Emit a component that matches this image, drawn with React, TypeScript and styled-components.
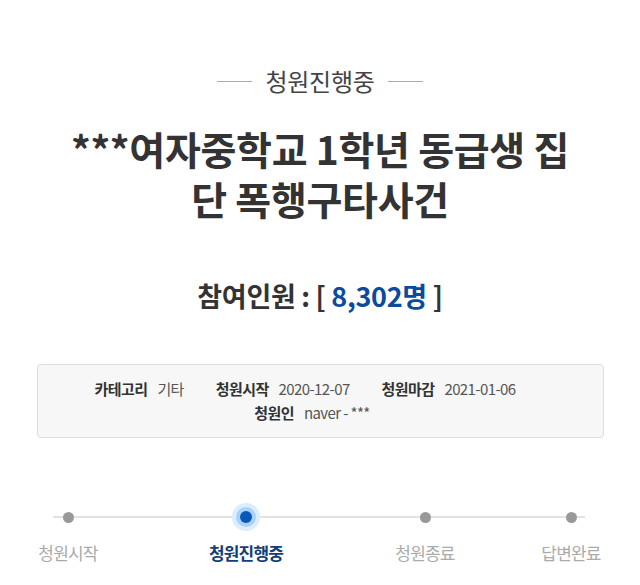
import React from "react";
import styled, { createGlobalStyle } from "styled-components";

const GlobalStyle = createGlobalStyle`
  body {
    margin: 0;
    background: #fff;
    font-family: "Noto Sans CJK KR", "Noto Sans", sans-serif;
    color: #333;
  }
`;

const Page = styled.div`
  width: 640px;
  height: 585px;
  overflow: hidden;
  display: flex;
  flex-direction: column;
  align-items: center;
`;

const Status = styled.div`
  margin-top: 66px;
  display: flex;
  align-items: center;
  gap: 14px;
  font-size: 24px;
  line-height: 30px;
  color: #444;
  letter-spacing: -0.3px;
  &::before,
  &::after {
    content: "";
    width: 35px;
    height: 1px;
    background: #aaa;
  }
`;

const Title = styled.h1`
  margin: 27px 0 0;
  width: 520px;
  text-align: center;
  font-size: 39px;
  line-height: 50px;
  font-weight: 700;
  color: #333;
  letter-spacing: -0.3px;
`;

const Count = styled.div`
  margin-top: 56px;
  font-size: 27px;
  line-height: 34px;
  font-weight: 700;
  color: #333;
  letter-spacing: -0.3px;
  span {
    color: #0b4a9c;
  }
`;

const InfoBox = styled.div`
  margin-top: 51px;
  width: 567px;
  height: 74px;
  box-sizing: border-box;
  background: #f7f7f7;
  border: 1px solid #ddd;
  border-radius: 4px;
  display: flex;
  flex-direction: column;
  justify-content: center;
  gap: 2px;
`;

const InfoRow = styled.div<{ $shift: number }>`
  display: flex;
  justify-content: center;
  gap: 32px;
  padding-right: ${(p) => p.$shift}px;
  font-size: 15px;
  line-height: 22px;
`;

const Item = styled.div`
  display: flex;
  gap: 10px;
  letter-spacing: -0.6px;
`;

const Label = styled.span`
  font-weight: 700;
  color: #333;
`;

const Value = styled.span`
  color: #555;
`;

const Steps = styled.div`
  margin-top: 67px;
  width: 640px;
  position: relative;
  display: flex;
  &::before {
    content: "";
    position: absolute;
    left: 53px;
    width: 532px;
    top: 11px;
    height: 2px;
    background: #e2e2e2;
  }
`;

const Step = styled.div<{ $offset: number }>`
  margin-left: ${(p) => p.$offset}px;
  width: 80px;
  display: flex;
  flex-direction: column;
  align-items: center;
  position: relative;
`;

const DotWrap = styled.div`
  width: 26px;
  height: 24px;
  display: flex;
  align-items: center;
  justify-content: center;
`;

const Dot = styled.div`
  width: 11px;
  height: 11px;
  border-radius: 50%;
  background: #999;
`;

const ActiveDot = styled.div`
  width: 12px;
  height: 12px;
  border-radius: 50%;
  background: #0a57b8;
  box-shadow: 0 0 0 4px #a9d2fb, 0 0 0 8px #dcedfd;
`;

const StepLabel = styled.div<{ $active?: boolean }>`
  margin-top: 12px;
  font-size: 17px;
  line-height: 24px;
  white-space: nowrap;
  letter-spacing: -0.8px;
  font-weight: ${(p) => (p.$active ? 700 : 400)};
  color: ${(p) => (p.$active ? "#143e78" : "#aaa")};
`;

const steps = [
  { label: "청원시작", offset: 28 },
  { label: "청원진행중", offset: 98, active: true },
  { label: "청원종료", offset: 99 },
  { label: "답변완료", offset: 66 },
];

export default function App() {
  return (
    <Page>
      <GlobalStyle />
      <Status>청원진행중</Status>
      <Title>***여자중학교 1학년 동급생 집단 폭행구타사건</Title>
      <Count>
        참여인원 : [ <span>8,302명</span> ]
      </Count>
      <InfoBox>
        <InfoRow $shift={30}>
          <Item>
            <Label>카테고리</Label>
            <Value>기타</Value>
          </Item>
          <Item>
            <Label>청원시작</Label>
            <Value>2020-12-07</Value>
          </Item>
          <Item>
            <Label>청원마감</Label>
            <Value>2021-01-06</Value>
          </Item>
        </InfoRow>
        <InfoRow $shift={16}>
          <Item>
            <Label>청원인</Label>
            <Value>naver - ***</Value>
          </Item>
        </InfoRow>
      </InfoBox>
      <Steps>
        {steps.map((s) => (
          <Step key={s.label} $offset={s.offset}>
            <DotWrap>{s.active ? <ActiveDot /> : <Dot />}</DotWrap>
            <StepLabel $active={s.active}>{s.label}</StepLabel>
          </Step>
        ))}
      </Steps>
    </Page>
  );
}
